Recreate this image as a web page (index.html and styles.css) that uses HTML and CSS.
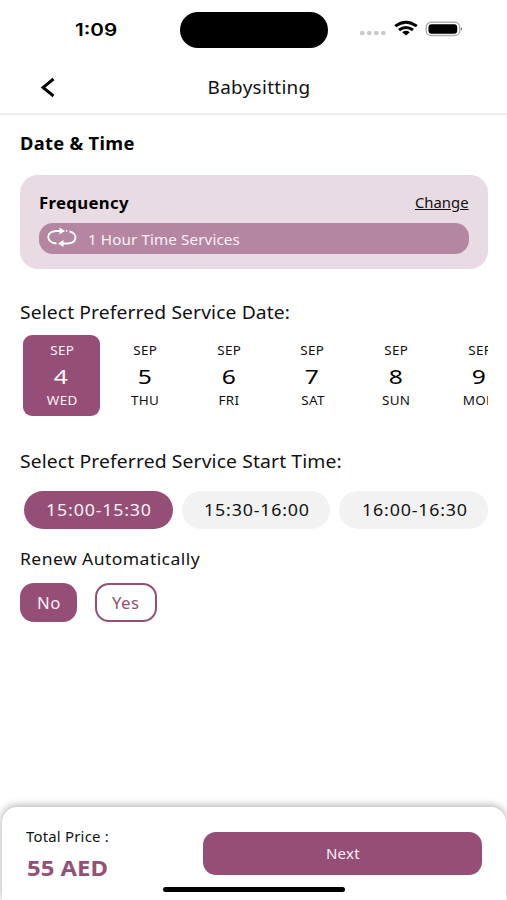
FILE: index.html
```html
<!DOCTYPE html>
<html lang="en">
<head>
<meta charset="utf-8">
<meta name="viewport" content="width=device-width, initial-scale=1">
<title>Babysitting</title>
<link rel="stylesheet" href="styles.css">
</head>
<body>
<div class="screen">
  <div class="status">
    <span class="clock"><span>1:09</span></span>
    <span class="island"></span>
    <svg class="signals" width="106" height="18" viewBox="0 0 106 18">
      <g fill="#c9c9c9"><rect x="1" y="11" width="4.500" height="4" rx="1.600"/><rect x="8" y="11" width="4.500" height="4" rx="1.600"/><rect x="15" y="11" width="4.500" height="4" rx="1.600"/><rect x="22" y="11" width="4.500" height="4" rx="1.600"/></g>
      <g fill="none" stroke="#000" stroke-width="2.900"><path d="M36.200 6.200Q47 -1.800 57.800 6.200"/><path d="M40 10Q47 4.800 54 10"/></g>
      <path d="M43.200 12.200Q47 9.400 50.800 12.200L47 15.500Z"/>
      <rect x="67.200" y="2.300" width="33.500" height="13.200" rx="4.800" fill="none" stroke="#b0b0b0" stroke-width="1.400"/>
      <rect x="69.500" y="4.300" width="28.700" height="9.400" rx="3"/>
      <path d="M102 7Q104.400 8.900 102 10.800Z" fill="#777"/>
    </svg>
  </div>
  <header class="bar">
    <svg class="back" width="16" height="22" viewBox="0 0 16 22"><path d="M13.500 3 3 11.500 13.500 20" fill="none" stroke="#000" stroke-width="2.900"/></svg>
    <h1 class="title"><span>Babysitting</span></h1>
  </header>
  <main class="content">
    <h2 class="heading"><span>Date &amp; Time</span></h2>
    <section class="card">
      <div class="card-top"><h3 class="card-title"><span>Frequency</span></h3><a class="change"><span>Change</span></a></div>
      <div class="service">
        <svg width="30" height="20" viewBox="0 0 30 20"><g fill="none" stroke="#fff" stroke-width="1.800"><path d="M9.500 15.500C-1.500 14.500 -1.500 3.500 9 3H14"/><path d="M22.500 3.500C31 5 30.500 15.500 20 15.500H15"/></g><path fill="#fff" d="M12.500 -.5 18 3 12.500 6.500ZM16.500 12 11 15.500 16.500 19Z"/><circle cx="19.500" cy="2.800" r=".9" fill="#fff"/></svg>
        <span class="service-name"><span>1 Hour Time Services</span></span>
      </div>
    </section>
    <h2 class="label"><span>Select Preferred Service Date:</span></h2>
    <div class="dates">
      <div class="day on"><small>SEP</small><b>4</b><small>WED</small></div>
      <div class="day"><small>SEP</small><b>5</b><small>THU</small></div>
      <div class="day"><small>SEP</small><b>6</b><small>FRI</small></div>
      <div class="day"><small>SEP</small><b>7</b><small>SAT</small></div>
      <div class="day"><small>SEP</small><b>8</b><small>SUN</small></div>
      <div class="day"><small>SEP</small><b>9</b><small>MON</small></div>
    </div>
    <h2 class="label time-label"><span>Select Preferred Service Start Time:</span></h2>
    <div class="times">
      <div class="slot on"><span>15:00-15:30</span></div>
      <div class="slot"><span>15:30-16:00</span></div>
      <div class="slot"><span>16:00-16:30</span></div>
    </div>
    <h2 class="renew"><span>Renew Automatically</span></h2>
    <div class="choices"><div class="choice on"><span>No</span></div><div class="choice yes"><span>Yes</span></div></div>
  </main>
  <footer class="checkout">
    <div class="total"><div class="total-label"><span>Total Price :</span></div><div class="amount"><span>55 AED</span></div></div>
    <div class="next"><span>Next</span></div>
    <span class="home"></span>
  </footer>
</div>
</body>
</html>
```
FILE: styles.css
```css
* { box-sizing: border-box; }
body { margin: 0; background: #fff; color: #111; font-family: "Noto Sans", "Open Sans", sans-serif; }
h1, h2, h3 { margin: 0; font-weight: 400; }
.screen { width: 507px; height: 900px; overflow: hidden; display: flex; flex-direction: column; }

/* Wide lettering: every label stretches by its own --w */
.clock span, .title span, .heading span, .card-title span, .change span, .service-name span,
.label span, .renew span, .slot span, .choice span, .total-label span, .amount span, .next span {
  display: inline-block; transform: scaleX(var(--w, 1)); transform-origin: left center;
}
.title span, .slot span, .choice span, .next span { transform-origin: center; }
.change span { transform-origin: right center; }

.status { height: 60px; display: grid; grid-template-columns: 180px 148px 1fr; align-items: center; }
.clock { --w: 1.18; padding-left: 75px; font: 600 17.500px/24px Inter, sans-serif; color: #000; }
.island { height: 36px; margin-top: -1px; border-radius: 18px; background: #000; }
.signals { margin-left: 31px; margin-top: -2px; }
.bar { height: 55px; border-bottom: 2px solid #eee; display: grid; grid-template-columns: 40px 1fr 40px; align-items: center; }
.back { margin-left: 40px; }
.title { --w: 1.05; text-align: center; font-size: 18px; line-height: 24px; letter-spacing: .3px; margin-left: 11px; }
.content { flex: 1; padding: 0 19px 0 20px; }
.heading { --w: 1.045; font-size: 17.500px; line-height: 24px; font-weight: 700; color: #000; margin-top: 16px; letter-spacing: .3px; }
.card { margin-top: 20px; height: 94px; border-radius: 18px; background: #e8dbe4; padding: 16px 19px; }
.card-top { display: flex; justify-content: space-between; height: 32px; line-height: 24px; }
.card-title { --w: 1.08; font-size: 15.500px; font-weight: 700; color: #000; letter-spacing: .3px; }
.change { --w: 1.06; font-size: 14px; line-height: 23px; }
.change span { text-decoration: underline; }
.service { height: 31px; border-radius: 14px; background: #b586a1; display: flex; align-items: center; padding-left: 8px; color: #fbeff6; }
.service svg { overflow: visible; margin-top: -2px; }
.service-name { --w: 1.085; margin: 1px 0 0 11px; font-size: 14px; letter-spacing: .1px; }
.label { --w: 1.072; margin-top: 30px; font-size: 18px; line-height: 26px; letter-spacing: .1px; }
.dates { margin-top: 10px; padding-left: 3px; display: flex; gap: 7px; overflow: hidden; }
.day { flex: 0 0 76.600px; height: 81px; border-radius: 9px; display: flex; flex-direction: column; align-items: center; padding-top: 8px; }
.day small { font-size: 12px; line-height: 16px; letter-spacing: .3px; transform: translateX(.5px) scaleX(1.12); }
.day b { font-weight: 400; font-size: 20.500px; line-height: 28px; margin: 3px 0; color: #000; transform: scaleX(1.2); }
.on { background: #954f76; color: #fbeff6; }
.day.on b { color: #fff; }
.time-label { --w: 1.075; margin-top: 32px; }
.times { margin-top: 17px; padding-left: 4px; display: flex; gap: 9px; }
.slot { --w: 1.15; flex: 1; height: 38px; border-radius: 19px; background: #f2f2f2; text-align: center; font-size: 15.500px; line-height: 39px; letter-spacing: .7px; padding-left: 2px; }
.slot.on { background: #954f76; }
.renew { --w: 1.095; margin-top: 18px; font-size: 16px; line-height: 24px; letter-spacing: .4px; }
.choices { display: flex; gap: 18px; margin-top: 12px; }
.choice { --w: 1.08; height: 39px; width: 57px; border-radius: 14px; text-align: center; line-height: 41px; font-size: 15.500px; letter-spacing: .4px; }
.yes { width: 62px; border: 2px solid #954f76; color: #954f76; line-height: 37px; }
.checkout { position: relative; height: 93px; margin: 0 1px 0 2px; border-radius: 15px 15px 0 0; background: #fff; box-shadow: 0 -1px 9px rgba(0,0,0,.35); display: flex; padding: 17px 24px; justify-content: space-between; }
.total-label { --w: 1.065; font-size: 14px; line-height: 25px; letter-spacing: .2px; }
.amount { --w: 1.165; font-size: 20.500px; line-height: 28px; font-weight: 700; color: #954f76; margin: 5px 0 0 1px; }
.next { --w: 1.07; width: 279px; height: 43px; margin-top: 8px; border-radius: 13px; background: #954f76; color: #fbeff6; text-align: center; font-size: 14px; line-height: 44px; letter-spacing: .3px; }
.home { position: absolute; left: 161px; bottom: 8px; width: 182px; height: 5px; border-radius: 3px; background: #000; }
```
